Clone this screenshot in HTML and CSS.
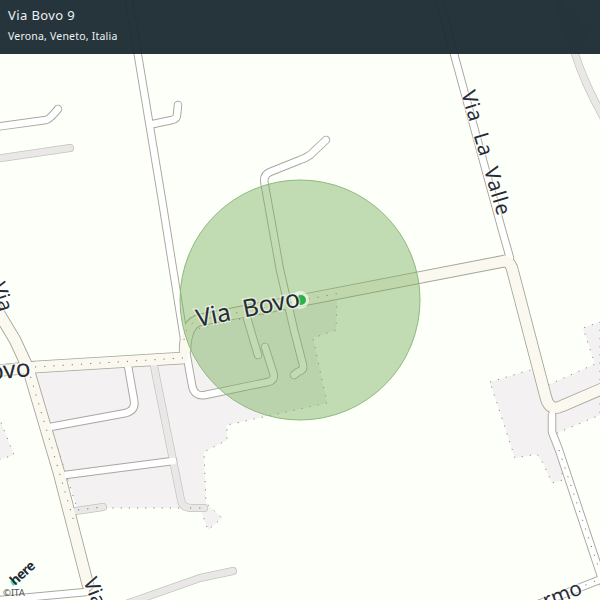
FILE: index.html
```html
<!DOCTYPE html>
<html lang="en">
<head>
  <meta charset="UTF-8">
  <meta name="viewport" content="width=device-width, initial-scale=1.0">
  <title>Via Bovo 9</title>
  <link rel="stylesheet" href="styles.css">
</head>
<body>
  <div class="map">
    <svg class="map-canvas" width="600" height="600" viewBox="0 0 600 600">
      <defs>
        <!-- white side roads -->
        <g id="roads-small">
          <path d="M128,-5 L162,200 L187,357 L192,385 Q194,397 205,395 L268,382 Q276,380 273,372 L265,347"/>
          <path d="M438,-5 L502,230 L510,258"/>
          <path d="M-5,127 L46,120 Q50,119 58,109"/>
          <path d="M153,124 L172,120 Q177,119 177,115 L178,105"/>
          <path d="M326,140 L310,155 Q306,158 300,160 L270,172 Q263,175 264.500,183 L280,270 L294,330 L303,365 Q304,370 298,372 L294,375"/>
          <path d="M247,318 L258,355"/>
          <path d="M128,366 L134,400 Q136,410 126,413 L50,427"/>
          <path d="M173,461 L65,475"/>
          <path d="M552,415 L552,432 L559,450 L604,585"/>
          <path d="M536,605 L604,578"/>
          <path d="M0,600 L86,592"/>
        </g>
        <!-- wider yellow roads -->
        <g id="roads-wide">
          <path d="M505,261 L200,320 Q186,323 185,350"/>
          <path d="M-4,371 L35,367 L183,358"/>
          <path d="M-6,305 L15,340 L28,368 L59,473 L88,585"/>
          <path d="M505,261 Q511,262 513,272 L546,398 Q550,412 562,406 L604,388"/>
        </g>
        <!-- grey service roads -->
        <g id="roads-grey">
          <path d="M-5,159 L70,148"/>
          <path d="M154,366 L181,500 Q182,508 192,508 L204,508"/>
          <path d="M76,511 L103,507"/>
          <path d="M126,604 L200,578 L233,571"/>
          <path d="M556,-5 L575,54 Q585,85 606,122"/>
          <path d="M571,14 L584,34 Q586,40 578,41 L572,37 Z"/>
        </g>
      </defs>

      <polygon class="area" points="337,298 336,330 313,338 327,403 227,425 227,440 204,452 206,503 222,518 208,530 200,508 77,508 33,372 186,358 192,330"/>
      <polygon class="area" points="490,382 530,370 548,385 595,364 583,328 600,322 600,415 557,433 563,480 552,483 543,463 537,454 515,458"/>
      <polygon class="area" points="-2,415 14,455 -2,460"/>

      <g class="casing casing-grey"><use href="#roads-grey"/></g>
      <g class="casing casing-small"><use href="#roads-small"/></g>
      <g class="casing casing-wide"><use href="#roads-wide"/></g>
      <g class="fill fill-grey"><use href="#roads-grey"/></g>
      <g class="fill fill-small"><use href="#roads-small"/></g>
      <g class="fill fill-wide"><use href="#roads-wide"/></g>

      <path class="dots" d="M184,340 Q186,323 200,320 L340,293"/>
      <path class="dots" d="M35,367 L183,358 M28,368 L75,525 M559,450 L600,572 M78,510 L103,507 M190,508 L206,508 M560,596 L600,579"/>

      <circle class="radius" cx="300" cy="300" r="120"/>

      <circle class="pin-halo" cx="300" cy="300" r="9"/>
      <circle class="pin" cx="301" cy="300" r="5"/>

      <text class="label label-lg" transform="translate(198,327) rotate(-11.500)">Via&#160; Bovo</text>
      <text class="label label-lg" transform="translate(-26,382) rotate(-6)">Bovo</text>
      <text class="label label-md label-wide" transform="translate(461,93) rotate(73.500)">Via&#160; La&#160; Valle</text>
      <text class="label label-md" transform="translate(-9,285) rotate(72)">Via</text>
      <text class="label label-md" transform="translate(83,581) rotate(68)">Via</text>
      <text class="label label-md" transform="translate(600,110) rotate(62)">Via</text>
      <text class="label label-md" transform="translate(546,608) rotate(-21)">rmo</text>

      <polygon class="here-mark" points="10,581 18,582 13,586"/>
      <text class="here-logo" transform="translate(15,586) rotate(-42)">here</text>
      <text class="copyright" x="3" y="596">©ITA</text>
    </svg>

    <header class="place-header">
      <h1 class="place-title">Via Bovo 9</h1>
      <p class="place-sub">Verona, Veneto, Italia</p>
    </header>
  </div>
</body>
</html>
```

FILE: styles.css
```css
body {
  margin: 0;
  font-family: "Noto Sans", sans-serif;
}
.map {
  position: relative;
  width: 600px;
  height: 600px;
  overflow: hidden;
  background: #fdfff9;
}
.map-canvas {
  display: block;
}
.place-header {
  position: absolute;
  top: 0;
  left: 0;
  right: 0;
  height: 54px;
  padding: 6px 8px 0;
  box-sizing: border-box;
  background: rgba(26, 41, 49, 0.95);
  color: #eef1f2;
}
.place-title {
  margin: 0;
  font-size: 13px;
  font-weight: 400;
  line-height: 18px;
  letter-spacing: 0.4px;
}
.place-sub {
  margin: 5px 0 0;
  font-size: 10.5px;
  line-height: 14px;
  letter-spacing: 0.2px;
}
.area {
  fill: #f3f1f1;
  stroke: #8a8a88;
  stroke-width: 1;
  stroke-dasharray: 1.2 7;
}
.casing,
.fill {
  fill: none;
  stroke-linecap: round;
  stroke-linejoin: round;
}
.casing-small {
  stroke: #a8a79f;
  stroke-width: 8.500;
}
.fill-small {
  stroke: #fff;
  stroke-width: 6.600;
}
.casing-wide {
  stroke: #a5a498;
  stroke-width: 12.500;
}
.fill-wide {
  stroke: #fbf8ef;
  stroke-width: 10.800;
}
.casing-grey {
  stroke: #c4c3bf;
  stroke-width: 8;
}
.fill-grey {
  stroke: #e9e8e6;
  stroke-width: 6.600;
}
.dots {
  fill: none;
  stroke: #77776f;
  stroke-width: 1;
  stroke-dasharray: 1.2 8;
}
.radius {
  fill: rgba(120, 175, 90, 0.45);
  stroke: #8fb97c;
  stroke-width: 1;
}
.label {
  fill: #262c34;
  stroke: rgba(255, 255, 255, 0.55);
  stroke-width: 3px;
  paint-order: stroke;
  font-family: "Noto Sans", sans-serif;
}
.label-lg {
  font-size: 24.500px;
}
.label-md {
  font-size: 20.500px;
}
.label-wide {
  letter-spacing: 0.8px;
}
.pin-halo {
  fill: #fff;
  opacity: 0.6;
}
.pin {
  fill: #2cb14a;
}
.here-mark {
  fill: #48dac3;
}
.here-logo {
  fill: #1d2b33;
  font-size: 13.500px;
  font-weight: 700;
  letter-spacing: -0.7px;
}
.copyright {
  fill: #4a4f52;
  font-size: 9.500px;
}
```
